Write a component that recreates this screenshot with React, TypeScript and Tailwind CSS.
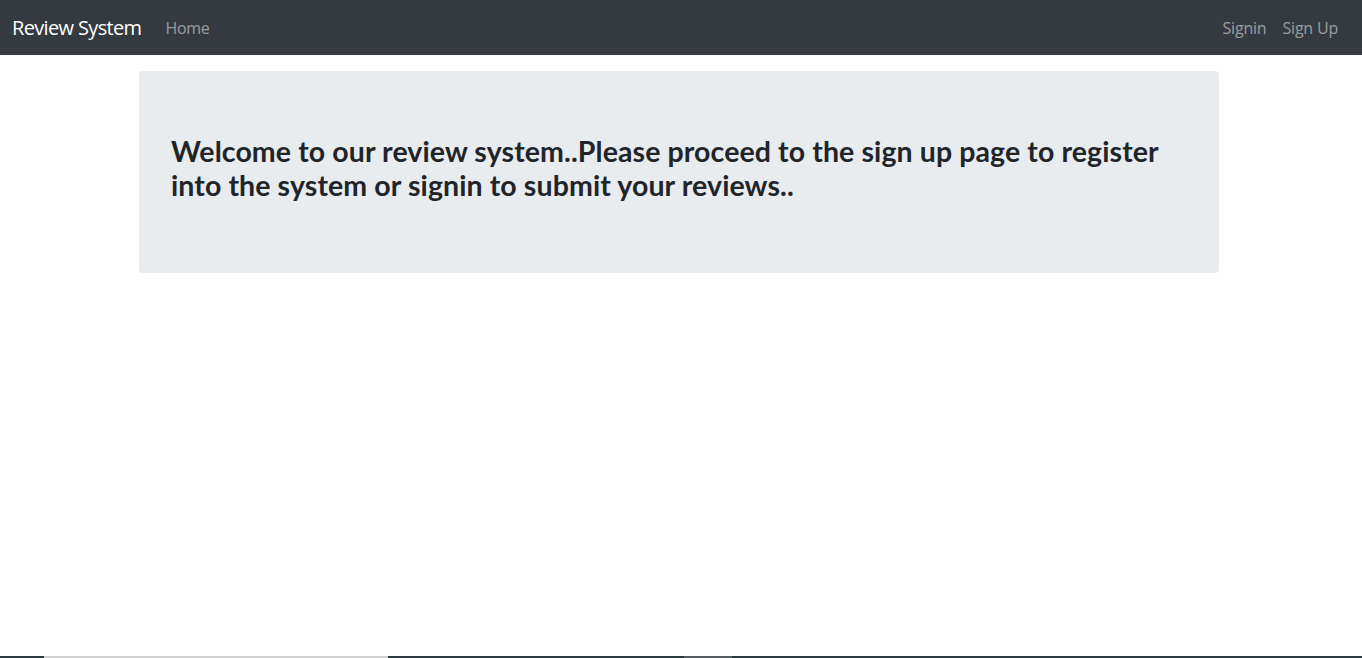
export default function App() {
  const font = { fontFamily: '"Open Sans", "Noto Sans", sans-serif' };

  return (
    <div className="flex min-h-[658px] flex-col bg-white" style={font}>
      {/* Navbar */}
      <nav className="flex h-[55px] items-center justify-between bg-[#343a40] pl-3 pr-4">
        <div className="flex items-center">
          <a href="#" className="mr-4 text-[20px] leading-[30px] tracking-[-0.65px] text-white">
            Review System
          </a>
          <a href="#" className="px-2 text-base tracking-[-0.3px] text-white/50">
            Home
          </a>
        </div>
        <div className="flex items-center">
          <a href="#" className="px-2 text-base tracking-[-0.2px] text-white/50">
            Signin
          </a>
          <a href="#" className="px-2 text-base tracking-[-0.2px] text-white/50">
            Sign Up
          </a>
        </div>
      </nav>

      {/* Jumbotron */}
      <div className="ml-[139px] mt-4 w-[1080px] rounded bg-[#e9ecef] px-8 pt-16 pb-[63px]">
        <h3 className="mb-2 font-['Lato',sans-serif] text-[28.5px] font-bold leading-[1.18] tracking-[0.1px] text-[#212529]">
          Welcome to our review system..Please proceed to the sign up page to register into the system or signin to submit your reviews..
        </h3>
      </div>

      <div className="grow" />

      {/* bottom edge strip */}
      <div className="flex h-[2px]">
        <div className="w-[44px] bg-[#2b3a3f]" />
        <div className="w-[344px] bg-[#d0d0d0]" />
        <div className="w-[296px] bg-[#2b3a3f]" />
        <div className="w-[48px] bg-[#555d60]" />
        <div className="grow bg-[#2b3a3f]" />
      </div>
    </div>
  );
}
